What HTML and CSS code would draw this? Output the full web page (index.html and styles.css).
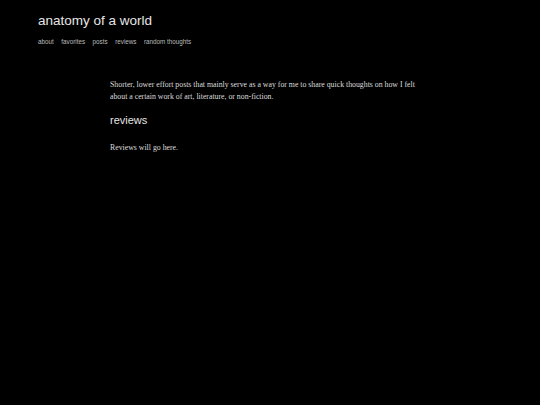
FILE: index.html
```html
<!DOCTYPE html>
<html>
<head>
<meta charset="utf-8">
<link rel="stylesheet" href="styles.css">
</head>
<body>
<header class="site-header">
  <h1 class="site-title">anatomy of a world</h1>
  <nav class="site-nav">
    <a href="#">about</a>
    <a href="#">favorites</a>
    <a href="#">posts</a>
    <a href="#">reviews</a>
    <a href="#">random thoughts</a>
  </nav>
</header>
<main class="content">
  <p class="intro">Shorter, lower effort posts that mainly serve as a way for me to share quick thoughts on how I felt about a certain work of art, literature, or non-fiction.</p>
  <h2 class="section-title">reviews</h2>
  <p class="body-text">Reviews will go here.</p>
</main>
</body>
</html>
```

FILE: styles.css
```css
html, body {
  margin: 0;
  padding: 0;
  background: #000;
  width: 540px;
  height: 405px;
}
.site-header {
  padding: 12px 0 0 38px;
}
.site-title {
  margin: 0;
  font-family: "Liberation Sans", Arial, sans-serif;
  font-weight: normal;
  font-size: 13.5px;
  line-height: 18px;
  color: #e6e6e6;
}
.site-nav {
  display: flex;
  gap: 7.5px;
  margin-top: 8px;
}
.site-nav a {
  font-family: "Liberation Sans", Arial, sans-serif;
  font-size: 6.3px;
  line-height: 8px;
  color: #bbb;
  text-decoration: none;
}
.content {
  width: 320px;
  margin: 33px auto 0;
}
.intro, .body-text {
  margin: 0;
  font-family: "Liberation Serif", "Times New Roman", serif;
  font-size: 7.8px;
  line-height: 12px;
  color: #ddd;
}
.section-title {
  margin: 10px 0 15px;
  font-family: "Liberation Sans", Arial, sans-serif;
  font-weight: normal;
  font-size: 11px;
  line-height: 14px;
  color: #e6e6e6;
}
```
